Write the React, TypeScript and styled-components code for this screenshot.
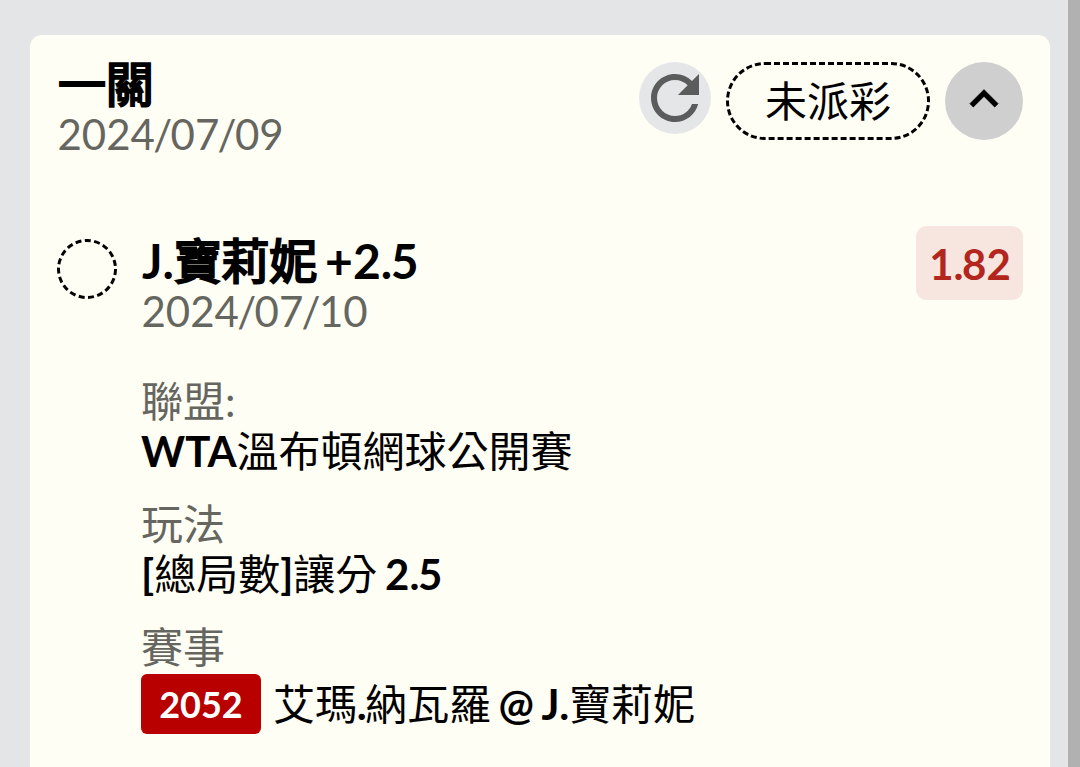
import { Fragment } from 'react'
import type { ReactNode } from 'react'
import styled, { createGlobalStyle } from 'styled-components'
import { MdKeyboardArrowUp, MdRefresh } from 'react-icons/md'

const GlobalStyle = createGlobalStyle`
  * {
    box-sizing: border-box;
  }

  body {
    margin: 0;
    overflow: hidden;
    background: #e4e5e7;
    font-family: Lato, "Noto Sans CJK TC", sans-serif;
    color: #000;
  }
`

const Page = styled.div`
  display: flex;
  height: 767px;
  overflow: hidden;
`

const Content = styled.main`
  flex: 1;
  padding: 35px 18px 0 30px;
`

const ScrollTrack = styled.div`
  width: 12px;
  background: #b1b1b1;
`

const Card = styled.section`
  height: 760px;
  padding: 27px 27px 0 28px;
  border-radius: 12px;
  background: #fffef5;
`

const CardHeader = styled.header`
  display: flex;
  justify-content: space-between;
  align-items: flex-start;
  height: 164px;
`

const Title = styled.h2`
  margin: -2px 0 1px;
  font-size: 48px;
  line-height: 48px;
  font-weight: 400;
  white-space: nowrap;
  word-spacing: -3.5px;
`

/* chinese glyphs in titles are a thickened regular weight */
const Thick = styled.span`
  letter-spacing: -0.3px;
  -webkit-text-stroke: 2.2px currentColor;
`

const Latin = styled.span`
  font-weight: 700;
`

const Dot = styled.span`
  letter-spacing: -1.5px;
`

const DateText = styled.div`
  margin-left: -0.5px;
  font-size: 42px;
  line-height: 50px;
  color: #666660;
`

const Slash = styled.span`
  margin: 0 -1.7px;
`

const Actions = styled.div`
  display: flex;
  align-items: flex-start;
`

const RefreshButton = styled.button`
  display: flex;
  width: 72px;
  height: 72px;
  margin-right: 15px;
  padding: 0;
  border: 0;
  border-radius: 50%;
  background: #e4e6e7;
  color: #5b5d5c;
`

const Status = styled.div`
  position: relative;
  display: flex;
  align-items: center;
  justify-content: center;
  width: 204px;
  height: 78px;
  margin-right: 15px;
  font-size: 42px;
  line-height: 50px;
`

const DashedOutline = styled.svg`
  position: absolute;
  inset: 0;
  fill: none;
  stroke: #000;
  stroke-width: 3;
`

const ToggleButton = styled.button`
  display: flex;
  align-items: center;
  justify-content: center;
  width: 78px;
  height: 78px;
  padding: 0 0 4px;
  border: 0;
  border-radius: 50%;
  background: #cfcfcf;
  color: #000;

  svg path:last-child {
    stroke: #000;
    stroke-width: 0.4;
  }
`

const Bet = styled.article`
  display: grid;
  grid-template-columns: 84px 1fr auto;
  align-items: start;
`

const BetMark = styled.div`
  position: relative;
  width: 60px;
  height: 60px;
  margin: 13px 0 0 -1px;
`

const Odds = styled.div`
  width: 107px;
  height: 74px;
  padding-left: 1px;
  border-radius: 11px;
  background: #f6e6df;
  color: #b3261e;
  font-size: 42px;
  line-height: 76px;
  font-weight: 700;
  text-align: center;
`

const Info = styled.div`
  padding-top: 13px;
`

const Details = styled.dl`
  margin: 40px 0 0 -1px;
`

const Detail = styled.div`
  margin-bottom: 23px;
  font-size: 42px;
  line-height: 50px;
  white-space: nowrap;
  word-spacing: -2.5px;

  dt {
    color: #666660;
  }

  dd {
    display: flex;
    align-items: center;
    margin: 0;
    white-space: pre;
  }
`

const MatchCode = styled.span`
  width: 120px;
  height: 60px;
  margin: 2px 12px 0 0;
  border-radius: 6px;
  background: #b80000;
  color: #fff;
  font-size: 36px;
  line-height: 61px;
  font-weight: 700;
  text-align: center;
`

const Teams = styled.span`
  padding-top: 2px;
  letter-spacing: -0.1px;
`

function DateLine({ value }: { value: string }) {
  return (
    <DateText>
      {value.split('/').map((part, i) => (
        <Fragment key={i}>
          {i > 0 && <Slash>/</Slash>}
          {part}
        </Fragment>
      ))}
    </DateText>
  )
}

function DetailRow({ label, children }: { label: string; children: ReactNode }) {
  return (
    <Detail>
      <dt>{label}</dt>
      <dd>{children}</dd>
    </Detail>
  )
}

function App() {
  return (
    <Page>
      <GlobalStyle />
      <Content>
        <Card>
          <CardHeader>
            <div>
              <Title>
                <Thick>一關</Thick>
              </Title>
              <DateLine value="2024/07/09" />
            </div>
            <Actions>
              <RefreshButton aria-label="refresh">
                <MdRefresh size={72} />
              </RefreshButton>
              <Status>
                <DashedOutline width="204" height="78">
                  <rect x="1.5" y="1.5" width="201" height="75" rx="37.5" strokeDasharray="6 3" />
                </DashedOutline>
                未派彩
              </Status>
              <ToggleButton aria-label="toggle">
                <MdKeyboardArrowUp size={56} />
              </ToggleButton>
            </Actions>
          </CardHeader>
          <Bet>
            <BetMark>
              <DashedOutline width="60" height="60">
                <circle cx="30" cy="30" r="28.5" strokeDasharray="6 3.42" />
              </DashedOutline>
            </BetMark>
            <Info>
              <Title>
                <Latin>J.</Latin>
                <Thick>寶莉妮</Thick>
                <Latin> +2<Dot>.</Dot>5</Latin>
              </Title>
              <DateLine value="2024/07/10" />
              <Details>
                <DetailRow label="聯盟:">
                  <Latin>WTA</Latin>溫布頓網球公開賽
                </DetailRow>
                <DetailRow label="玩法">
                  <Latin>[</Latin>總局數<Latin>]</Latin>讓分<Latin> 2<Dot>.</Dot>5</Latin>
                </DetailRow>
                <DetailRow label="賽事">
                  <MatchCode>2052</MatchCode>
                  <Teams>
                    艾瑪<Latin><Dot>.</Dot></Latin>納瓦羅<Latin> @ J.</Latin>寶莉妮
                  </Teams>
                </DetailRow>
              </Details>
            </Info>
            <Odds>1<Dot>.</Dot>82</Odds>
          </Bet>
        </Card>
      </Content>
      <ScrollTrack />
    </Page>
  )
}

export default App
